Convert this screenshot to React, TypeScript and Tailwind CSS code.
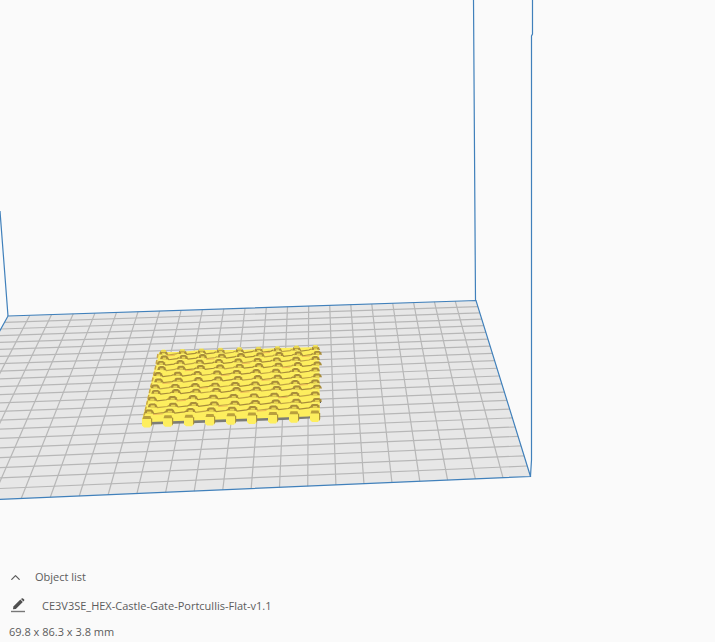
import React from 'react';
import { ChevronUp } from 'lucide-react';

type Point = [number, number];

// Corners in order: back left, back right, front right, front left
const PLATE: Point[] = [[8, 316], [476, 300.5], [530.5, 476.5], [-96, 503.6]];
const MODEL: Point[] = [[163, 353], [315, 348.5], [315, 415], [147, 420.5]];
const CELLS = 22;
const LINKS = 9;

// How far down the model each row of links sits, 0 at the back and 1 in front
const ROWS = [0, 0.07, 0.15, 0.23, 0.32, 0.41, 0.5, 0.58, 0.68, 0.78, 0.87, 1];

// Perspective mapping from the unit square to the four corners
function project(corners: Point[], u: number, v: number): Point {
  const [[x0, y0], [x1, y1], [x2, y2], [x3, y3]] = corners;
  const dx1 = x1 - x2, dx2 = x3 - x2, dx3 = x0 - x1 + x2 - x3;
  const dy1 = y1 - y2, dy2 = y3 - y2, dy3 = y0 - y1 + y2 - y3;
  const det = dx1 * dy2 - dx2 * dy1;
  const g = (dx3 * dy2 - dx2 * dy3) / det;
  const h = (dx1 * dy3 - dx3 * dy1) / det;
  const w = g * u + h * v + 1;
  return [
    ((x1 - x0 + g * x1) * u + (x3 - x0 + h * x3) * v + x0) / w,
    ((y1 - y0 + g * y1) * u + (y3 - y0 + h * y3) * v + y0) / w,
  ];
}

// Straight blend between the corners, used where the rows are already spaced
function blend(corners: Point[], u: number, v: number): Point {
  const [a, b, c, d] = corners;
  const mix = (i: number) => (a[i] * (1 - u) + b[i] * u) * (1 - v) + (d[i] * (1 - u) + c[i] * u) * v;
  return [mix(0), mix(1)];
}

const toPoints = (points: Point[]) => points.map((p) => p.map((n) => n.toFixed(1)).join(',')).join(' ');

function BuildPlate() {
  const steps = Array.from({ length: CELLS - 1 }, (_, i) => (i + 1) / CELLS);
  return (
    <g>
      <polygon points={toPoints(PLATE)} fill="#e7e7e7" />
      <g stroke="#b7b7b7" strokeWidth="1.2">
        {steps.map((t) => {
          const [ax, ay] = project(PLATE, t, 0);
          const [bx, by] = project(PLATE, t, 1);
          const [cx, cy] = project(PLATE, 0, t);
          const [dx, dy] = project(PLATE, 1, t);
          return (
            <React.Fragment key={t}>
              <line x1={ax} y1={ay} x2={bx} y2={by} />
              <line x1={cx} y1={cy} x2={dx} y2={dy} />
            </React.Fragment>
          );
        })}
      </g>
      {/* Edges of the build volume */}
      <g fill="none" stroke="#4080bb" strokeWidth="1.2">
        <polygon points={toPoints(PLATE)} />
        <path d="M0 211 L8 316 M473.5 0 L475.5 301 M532.5 0 L532.5 34 L531.5 36 L531.5 460 L530.5 476" />
      </g>
    </g>
  );
}

function Link({ x, y, size, front }: { x: number; y: number; size: number; front: boolean }) {
  if (front) {
    return (
      <g>
        <path d={`M${x - 5} ${y - 2} l2 -3 h6 l2 3 v6 l-2 3 h-6 l-2 -2z`} fill="#fdee5e" />
        <path d={`M${x - 3.5} ${y - 4.5} h7 l1 3 h-9z`} fill="#b99f3d" />
        <path d={`M${x + 4} ${y - 2} h1.2 v6 l-1.2 2z`} fill="#ab933a" />
      </g>
    );
  }
  return (
    <g>
      <path d={`M${x - size} ${y + 1.5} l1 -3 l2 -1 h${size} l2 1.5 l1 2.5z`} fill="#a98d3a" />
      <path d={`M${x - size + 2} ${y - 2.5} h${size + 1} v-1 h-${size}z`} fill="#fff774" />
      <path d={`M${x - size + 2.5} ${y + 1.5} l0.5 -1.8 h${size} l0.5 1.8z`} fill="#ead652" />
    </g>
  );
}

function Model() {
  return (
    <g>
      {/* Shadow under the front edge */}
      <polygon points="151,419 319,413 319,418 283,420 240,421.5 198,423 151,424.5" fill="#7d7d76" />
      <path d="M205 422.5 l6 -0.5 M269 420 l7 -0.5 M318 402 h3" stroke="#35332c" strokeWidth="1.5" />
      <polygon
        points="159,352 180,352 200,350 240,350 280,348 319,347 320,415 308,416.5 150,422 142,420 146,405 150,388 154,371 157,362"
        fill="#fdee5e"
      />
      {/* Worn left side */}
      <path d="M158 354 L155 370 L150 390 L144 416" fill="none" stroke="#c9a744" strokeWidth="1.5" strokeDasharray="4 2" />
      {ROWS.map((v, row) => {
        const front = row === ROWS.length - 1;
        const size = 2.8 + v * 1.2;
        const links = Array.from({ length: LINKS }, (_, i) => {
          const lean = front ? 0 : (row % 2) * 2 - 1;
          const [x, y] = blend(MODEL, i / (LINKS - 1), v);
          return [x + lean, y] as Point;
        });
        return (
          <g key={v}>
            {!front &&
              links.slice(1).map(([x, y], i) => {
                const [px, py] = links[i];
                return (
                  <React.Fragment key={i}>
                    <path
                      d={`M${px + 3} ${py + 1} h2 l1 1 L${x - 5} ${y + 1.5} l2 -1`}
                      fill="none"
                      stroke={(row + i) % 3 ? '#a88c3b' : '#c0a446'}
                      strokeWidth="1.2"
                    />
                    {(row * 3 + i) % 5 === 0 && (
                      <path d={`M${px + 5} ${py + 2.8} L${x - 6} ${y + 2.8}`} stroke="#efb957" strokeWidth="1" />
                    )}
                  </React.Fragment>
                );
              })}
            {links.map(([x, y], i) => (
              <Link key={i} x={x} y={y} size={size} front={front} />
            ))}
          </g>
        );
      })}
      {/* Bumps along the back edge */}
      {Array.from({ length: LINKS }, (_, i) => {
        const [x, y] = blend(MODEL, i / (LINKS - 1), 0);
        return <rect key={i} x={x - 2} y={y - 3} width="5" height="2" fill="#e8d650" />;
      })}
    </g>
  );
}

function PencilIcon() {
  return (
    <svg className="h-4 w-4" viewBox="0 0 16 16" aria-hidden="true">
      <path d="M3 11.2 L3.4 8.6 L10.4 1.6 L12.8 4 L5.8 10.9z" fill="#505050" />
      <path d="M11 1 L12 0.3 Q12.5 0 13 0.4 L14.2 1.6 Q14.6 2.1 14.2 2.6 L13.4 3.4z" fill="#505050" />
      <path d="M1 13.5 H15" stroke="#777777" strokeWidth="1.4" />
    </svg>
  );
}

export default function App() {
  return (
    <main className="relative flex min-h-screen flex-col justify-end overflow-hidden bg-[#fafafa] font-['Open_Sans',sans-serif] text-[11px] text-[#5c5c5c]">
      <svg
        className="absolute left-0 top-0"
        width="715"
        height="560"
        viewBox="0 0 715 560"
        role="img"
        aria-label="Build plate with model"
      >
        <BuildPlate />
        <Model />
      </svg>

      <section className="relative flex flex-col items-start pl-2">
        <button type="button" aria-expanded="false" className="flex h-7 items-center gap-3">
          <ChevronUp size={15} strokeWidth={2} />
          <span>Object list</span>
        </button>
        <div className="flex h-[30px] items-center gap-4 pl-0.5">
          <button type="button" aria-label="Rename">
            <PencilIcon />
          </button>
          <span>CE3V3SE_HEX-Castle-Gate-Portcullis-Flat-v1.1</span>
        </div>
        <p className="pl-px pt-px leading-5">69.8 x 86.3 x 3.8 mm</p>
      </section>
    </main>
  );
}
